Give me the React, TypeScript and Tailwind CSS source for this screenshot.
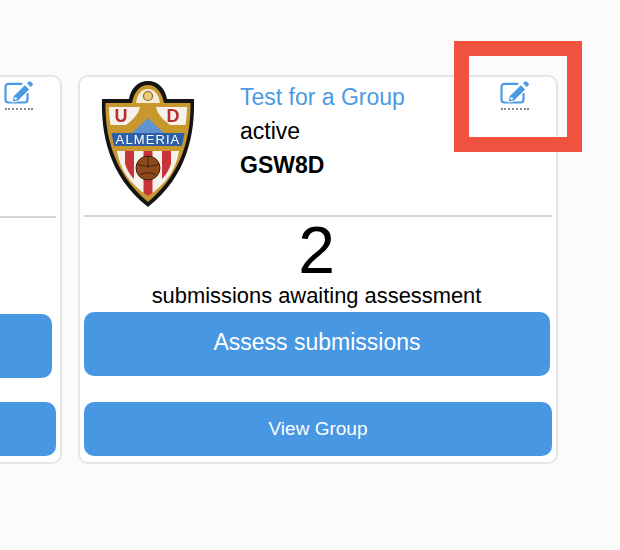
import React from 'react';

const EditIcon: React.FC = () => (
  <div className="flex w-[29px] flex-col items-center">
    <svg width="29" height="23" viewBox="0 0 29 23" fill="none">
      <path d="M17.500 2.800H4.500a3 3 0 0 0-3 3v12.700a3 3 0 0 0 3 3h16a3 3 0 0 0 3-3v-5.500" stroke="#4a9ae6" strokeWidth="2.200" strokeLinecap="round" />
      <path d="M20.800 3.800 25.500 8.500 14 20l-6 1.200 1.200-6z" fill="#4a9ae6" stroke="#fff" strokeWidth="1" />
      <path d="M23 2.300 24.800.600a1.200 1.200 0 0 1 1.700 0l2 2a1.200 1.200 0 0 1 0 1.700L26.800 6z" fill="#4a9ae6" />
      <circle cx="11.500" cy="17.500" r="1.300" fill="#fff" />
    </svg>
    <div className="mt-[4px] w-[28px] border-t-2 border-dotted border-[#8a8a8a]" />
  </div>
);

const Crest: React.FC = () => (
  <svg width="96" height="128" viewBox="0 0 96 128" style={{ filter: 'blur(0.6px)' }}>
    <path d="M48 1C38 1 31 8 29 19H2C1 52 8 96 48 127C88 96 95 52 94 19H67C65 8 58 1 48 1Z" fill="#141414" />
    <path d="M48 5C40 5 34 12 32 23H5.500C5 52 12 92 48 122C84 92 91 52 90.500 23H64C62 12 56 5 48 5Z" fill="#c8982f" />
    <path d="M48 9c-6 0-10.500 4-12 14h24C58.500 13 54 9 48 9z" fill="#f3ecd6" />
    <circle cx="48" cy="16" r="4.500" fill="#e9cb7c" stroke="#8a6420" strokeWidth="1.200" />
    <path d="M9 27h31c-1 6-6 12-14 18H10.500C9.500 39 9 33 9 27Z" fill="#f6f1ea" />
    <path d="M56 27h31c0 6-.5 12-1.500 18H70c-8-6-13-12-14-18Z" fill="#f6f1ea" />
    <path d="M48 38 64 53H32Z" fill="#5f93cf" />
    <text x="21" y="42" textAnchor="middle" fontFamily="Liberation Sans, sans-serif" fontWeight="700" fontSize="18" fill="#b5302c">U</text>
    <text x="73" y="42" textAnchor="middle" fontFamily="Liberation Sans, sans-serif" fontWeight="700" fontSize="18" fill="#b5302c">D</text>
    <path d="M11.500 53h73l-2.500 13H14Z" fill="#2c5fa6" />
    <text x="48" y="64" textAnchor="middle" fontFamily="Liberation Sans, sans-serif" fontWeight="400" fontSize="13" letterSpacing="1.100" fill="#fff">ALMERIA</text>
    <path d="M17 71h62C76 90 66 104 48 116C30 104 20 90 17 71Z" fill="#f5f2ea" />
    <path d="M25 71h9v28q-6-6-9-15ZM43.500 71h9v42l-4.500 3-4.500-3ZM62 71h9v13q-3 9-9 15Z" fill="#c9343a" />
    <circle cx="48" cy="88" r="12" fill="#8f4a1c" stroke="#3c2010" />
    <path d="M37 84c7 3 15 3 22 0M48 76v12M40 95c5-3 11-3 16 0" stroke="#3c2010" strokeWidth="1" fill="none" />
  </svg>
);

const GroupCard: React.FC<{ clipped?: boolean }> = ({ clipped }) => (
  <div className={`flex h-[389px] w-[480px] shrink-0 flex-col rounded-[10px] border-2 border-[#e3e6e8] bg-white px-[4px] ${clipped ? '-ml-[418px] mr-[16px] pt-[1px]' : ''}`}>
    <div className="flex h-[140px] shrink-0 border-b-2 border-[#d6d6d6]">
      <div className="w-[156px] shrink-0 pl-[16px] pt-[3px]">
        <Crest />
      </div>
      <div className="flex-1 pt-[3px] text-[23px] leading-[34px] text-black">
        <div className="text-[#4a9ae6]">Test for a Group</div>
        <div>active</div>
        <div className="font-bold">GSW8D</div>
      </div>
      <div className={`w-[57px] shrink-0 pl-[5px] ${clipped ? 'pt-[3px]' : 'pt-[4px]'}`}>
        <EditIcon />
      </div>
    </div>
    <div className="flex flex-col items-center pr-[3px] text-black">
      <div className="text-[66px] leading-[66px]">2</div>
      <div className="pt-[1px] text-[21.900px] leading-[24px]">submissions awaiting assessment</div>
    </div>
    <button className={`h-[64px] rounded-[10px] bg-[#4797e3] pb-[4px] text-[23px] text-white ${clipped ? 'mr-[4px] mt-[5px]' : 'mr-[2px] mt-[4px]'}`}>
      Assess submissions
    </button>
    <button className={`h-[54px] rounded-[10px] bg-[#4797e3] text-[19px] text-white ${clipped ? 'mt-[24px]' : 'mt-[26px]'}`}>View Group</button>
  </div>
);

const App: React.FC = () => (
  <div className="relative h-[550px] w-[620px] overflow-hidden bg-[#fbfbfb] font-['Liberation_Sans',Arial,sans-serif]">
    <div className="flex items-start pt-[75px]">
      <GroupCard clipped />
      <GroupCard />
    </div>
    {/* red highlight around the edit icon */}
    <div className="absolute left-[454px] top-[41px] h-[111px] w-[128px] border-[15px] border-[#f15240]" />
  </div>
);

export default App;
